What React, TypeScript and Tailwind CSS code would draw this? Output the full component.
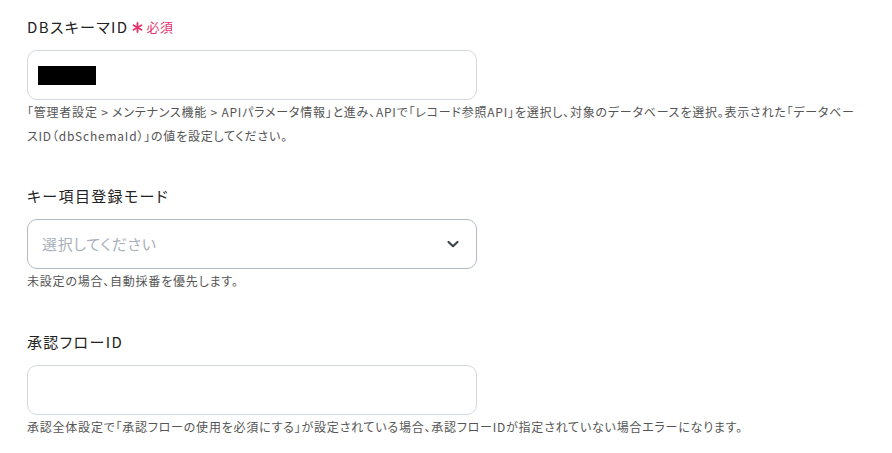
import React from "react";

const font = "font-['Noto_Sans_CJK_JP','Noto_Sans',sans-serif] [font-feature-settings:'palt']";

function Label({ text, required }: { text: string; required?: boolean }) {
  return (
    <div className="flex items-center h-[22px] mb-[12px]">
      <span className="text-[15px] font-normal text-[#222222] leading-[22px] tracking-[0.09em]">{text}</span>
      {required && (
        <span className="flex items-center ml-[4px] text-[#e2336b]">
          <svg width="11" height="11" viewBox="0 0 12 12" className="mr-[3px]">
            <g stroke="currentColor" strokeWidth="2" strokeLinecap="round">
              <line x1="6" y1="1" x2="6" y2="11" />
              <line x1="1.7" y1="3.5" x2="10.3" y2="8.5" />
              <line x1="1.7" y1="8.5" x2="10.3" y2="3.5" />
            </g>
          </svg>
          <span className="text-[13px] font-normal leading-[22px] tracking-[0.05em]">必須</span>
        </span>
      )}
    </div>
  );
}

function Help({ children }: { children: React.ReactNode }) {
  return <p className="text-[12px] leading-[24px] text-[#555555] tracking-[0.065em]">{children}</p>;
}

export default function App() {
  return (
    <div className={`${font} w-[892px] h-[453px] bg-white px-[27px] pt-[16px]`}>
      <section>
        <Label text="DBスキーマID" required />
        <div className="w-[450px] h-[50px] rounded-[10px] border border-[#d3d8df] flex items-center px-[10px]">
          <div className="w-[58px] h-[19px] bg-black" />
        </div>
        <Help>
          「管理者設定 &gt; メンテナンス機能 &gt; APIパラメータ情報」と進み、APIで「レコード参照API」を選択し、対象のデータベースを選択。表示された「データベースID（dbSchemaId）」の値を設定してください。
        </Help>
      </section>

      <section className="mt-[37px]">
        <Label text="キー項目登録モード" />
        <div className="w-[450px] h-[50px] rounded-[10px] border border-[#b4bac4] flex items-center justify-between pl-[14px] pr-[16px]">
          <span className="text-[15px] text-[#a9b0bb] tracking-[0.05em]">選択してください</span>
          <svg width="14" height="10" viewBox="0 0 14 10">
            <path d="M2.5 3 L7 7.2 L11.5 3" fill="none" stroke="#3f4550" strokeWidth="2.2" strokeLinecap="round" strokeLinejoin="round" />
          </svg>
        </div>
        <Help>未設定の場合、自動採番を優先します。</Help>
      </section>

      <section className="mt-[38px]">
        <Label text="承認フローID" />
        <div className="w-[450px] h-[50px] rounded-[10px] border border-[#d3d8df]" />
        <Help>
          承認全体設定で「承認フローの使用を必須にする」が設定されている場合、承認フローIDが指定されていない場合エラーになります。
        </Help>
      </section>
    </div>
  );
}
